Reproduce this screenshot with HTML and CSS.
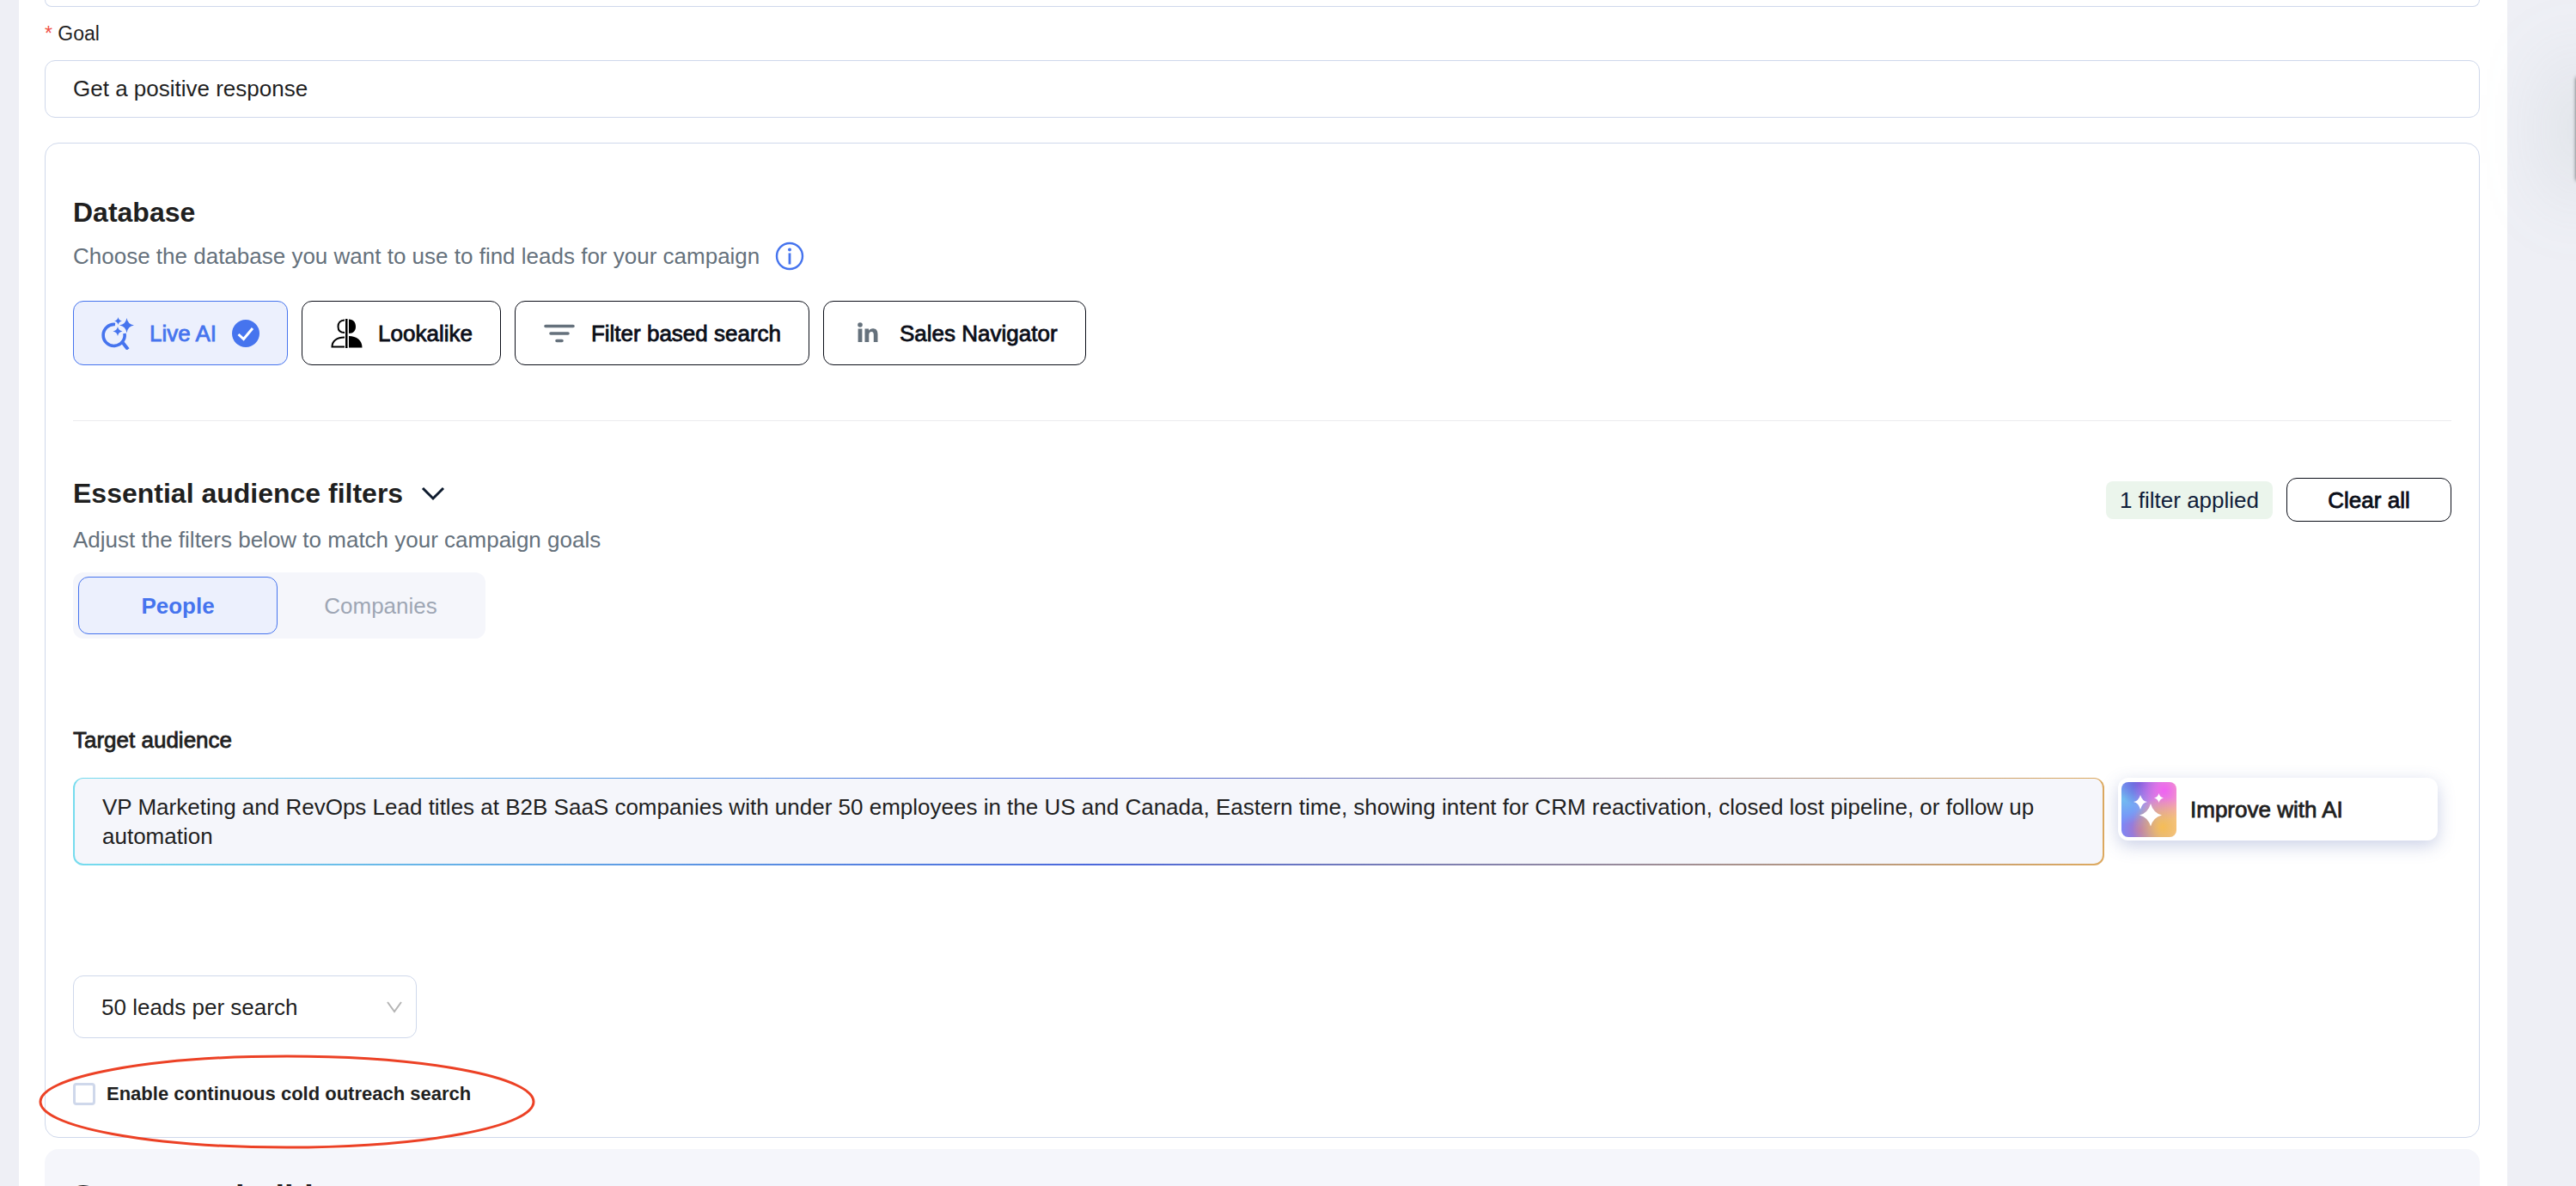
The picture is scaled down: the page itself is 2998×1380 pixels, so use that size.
FILE: index.html
```html
<!DOCTYPE html>
<html lang="en">
<head>
    <meta charset="UTF-8">
    <meta name="viewport" content="width=device-width, initial-scale=1.0">
    <title>Campaign setup</title>
    <link rel="stylesheet" href="styles.css">
</head>
<body>
    <main class="page">
        <div class="field-end"></div>

        <label class="goal-label" for="goal"><span class="required">*</span> Goal</label>
        <input class="goal-input" type="text" id="goal" value="Get a positive response">

        <section class="card">
            <h2>Database</h2>
            <p class="hint">
                Choose the database you want to use to find leads for your campaign
                <svg class="info" viewBox="0 0 34 34" fill="none" stroke="#4674ee" stroke-width="2.4">
                    <circle cx="17" cy="17" r="15"/>
                    <path d="M17 13.500v13" stroke-width="2.800"/>
                    <circle cx="17" cy="9.500" r="2" fill="#4674ee" stroke="none"/>
                </svg>
            </p>

            <div class="sources">
                <button class="source active">
                    <svg class="icon" viewBox="0 0 38 38" fill="none">
                        <path d="M16 8.500A12.500 12.500 0 1 0 27 19" stroke="#4674ee" stroke-width="3.600"/>
                        <path d="M23.500 28l7.500 9.500" stroke="#4674ee" stroke-width="4"/>
                        <path d="M29.500 1q1.200 7.500 8.500 8.500q-7.300 1-8.500 9q-1.200-8-8.500-9q7.300-1 8.500-8.500zM19.500 0q.7 3.800 4.500 4.500q-3.800.7-4.500 4.500q-.7-3.800-4.500-4.500q3.800-.7 4.500-4.500zM19 11q.8 4.700 5.500 5.500q-4.700.8-5.500 5.500q-.8-4.700-5.500-5.500q4.700-.8 5.500-5.500z" fill="#4674ee"/>
                    </svg>
                    <span>Live AI</span>
                    <svg class="check" viewBox="0 0 32 32">
                        <circle cx="16" cy="16" r="16" fill="#4674ee"/>
                        <path d="M7.500 17l6 5.500L24 10" fill="none" stroke="#fff" stroke-width="3"/>
                    </svg>
                </button>
                <button class="source">
                    <svg class="icon" viewBox="0 0 38 38">
                        <path d="M17 3.500C12 3.500 9.500 7 9.500 11S12 18 17 18" fill="none" stroke="#000" stroke-width="2"/>
                        <path d="M17 23.500C8 23.500 2.500 28 2.500 34.500H17" fill="none" stroke="#000" stroke-width="2"/>
                        <path d="M18 2h2.500v34H18zM22 2.500c5.500 0 8 4 8 8.500s-2.500 8-8 8zM22 22c9 0 15.500 5 15.500 13.500H22z"/>
                    </svg>
                    <span>Lookalike</span>
                </button>
                <button class="source">
                    <svg class="icon" viewBox="0 0 38 38" stroke="#65717c" stroke-width="3.600" stroke-linecap="round">
                        <path d="M3 10.500h32M9 19h20M16 27.500h6"/>
                    </svg>
                    <span>Filter based search</span>
                </button>
                <button class="source">
                    <svg class="icon" viewBox="0 0 38 38" fill="#65717c">
                        <circle cx="10" cy="9" r="2.800"/>
                        <path d="M7.600 13.500h4.800v15.500H7.600zM15.500 13.500H20v2.200c1-1.600 2.700-2.500 4.800-2.500 4.200 0 5.700 2.600 5.700 6.800v9h-4.700v-8.200c0-2.400-.7-3.700-2.500-3.700-2.100 0-3 1.400-3 3.800V29h-4.800z"/>
                    </svg>
                    <span>Sales Navigator</span>
                </button>
            </div>

            <hr>

            <div class="filters-head">
                <div>
                    <h2>Essential audience filters
                        <svg class="chevron" viewBox="0 0 28 20" fill="none" stroke="#0e1b2e" stroke-width="3">
                            <path d="M2 3l12 12L26 3"/>
                        </svg>
                    </h2>
                    <p class="hint">Adjust the filters below to match your campaign goals</p>
                </div>
                <div class="filters-actions">
                    <span class="badge">1 filter applied</span>
                    <button class="clear">Clear all</button>
                </div>
            </div>

            <div class="tabs">
                <button class="tab active">People</button>
                <button class="tab">Companies</button>
            </div>

            <label class="audience-label" for="audience">Target audience</label>
            <div class="audience">
                <textarea id="audience" rows="2">VP Marketing and RevOps Lead titles at B2B SaaS companies with under 50 employees in the US and Canada, Eastern time, showing intent for CRM reactivation, closed lost pipeline, or follow up automation</textarea>
                <button class="improve">
                    <span class="improve-icon">
                        <svg viewBox="0 0 64 64" fill="#fff">
                            <path d="M34 25q3 11 13 13.500q-10 2.500-13 13q-3-10.500-13-13q10-2.500 13-13.500zM22 15q2 7 8 8q-6 1-8 9q-2-8-8-9q6-1 8-8zM43.500 13q1 4.500 5.500 5.500q-4.500 1-5.500 5.500q-1-4.500-5.500-5.500q4.500-1 5.500-5.500z"/>
                        </svg>
                    </span>
                    Improve with AI
                </button>
            </div>

            <select class="leads" aria-label="Leads per search">
                <option>50 leads per search</option>
            </select>

            <div class="continuous">
                <input type="checkbox" id="continuous">
                <label for="continuous">Enable continuous cold outreach search</label>
                <svg class="highlight" viewBox="0 0 578 110" fill="none" stroke="#ec4125" stroke-width="3">
                    <ellipse cx="289" cy="55" rx="287" ry="53"/>
                </svg>
            </div>
        </section>

        <section class="next-card">
            <h2>Sequence builder</h2>
        </section>
    </main>
    <div class="drawer"></div>
</body>
</html>
```

FILE: styles.css
```css
* {
    box-sizing: border-box;
}

html {
    height: 100%;
    overflow: hidden;
}

body {
    height: 100%;
    margin: 0;
    overflow: hidden;
    background-color: #eeeff5;
    color: #1f1f1f;
    font-family: "Liberation Sans", Arial, sans-serif;
    font-size: 26px;
    line-height: 34px;
}

h2, p {
    margin: 0;
}

h2 {
    font-size: 32px;
    line-height: 40px;
}

button, input, select, textarea {
    font: inherit;
    color: inherit;
}

button {
    cursor: pointer;
}

.page {
    margin: 0 80px 0 22px;
    padding: 0 32px 0 30px;
    background-color: #fff;
}

.field-end {
    height: 8px;
    border: 1px solid #cfd8eb;
    border-top: none;
    border-radius: 0 0 12px 12px;
}

.goal-label {
    display: block;
    padding: 16px 0;
    font-size: 23px;
    line-height: 30px;
}

.required {
    color: #f0524b;
}

.goal-input {
    display: block;
    width: 100%;
    height: 67px;
    padding: 0 32px;
    border: 1px solid #cfd8eb;
    border-radius: 12px;
    background-color: #fff;
}

.card {
    margin-top: 29px;
    padding: 60px 32px 33px;
    border: 1px solid #cfd8eb;
    border-radius: 16px;
}

.hint {
    display: flex;
    align-items: center;
    gap: 18px;
    color: #65717c;
}

.card > .hint {
    margin-top: 14px;
}

.info {
    width: 34px;
    height: 34px;
}

.sources {
    display: flex;
    gap: 16px;
    margin-top: 35px;
}

.source {
    display: flex;
    align-items: center;
    gap: 18px;
    height: 75px;
    padding: 0 32px;
    border: 1px solid #0b0e18;
    border-radius: 12px;
    background-color: #fff;
    color: #0b0e18;
    -webkit-text-stroke: 0.8px;
}

.source.active {
    border-color: #4674ee;
    background-color: #ecf0fd;
    color: #4674ee;
}

.icon {
    width: 38px;
    height: 38px;
}

.check {
    width: 32px;
    height: 32px;
}

hr {
    margin: 64px 0 0;
    border: none;
    border-top: 1px solid #ececee;
}

.filters-head {
    display: flex;
    justify-content: space-between;
    margin-top: 64px;
}

.filters-head .hint {
    margin-top: 17px;
}

.chevron {
    width: 28px;
    height: 20px;
    margin-left: 12px;
}

.filters-actions {
    display: flex;
    align-items: center;
    align-self: flex-start;
    gap: 16px;
    padding-top: 2px;
}

.badge {
    padding: 5px 16px;
    border-radius: 8px;
    background-color: #ebf5ec;
    color: #10203a;
}

.clear {
    width: 192px;
    height: 51px;
    border: 1px solid #0b0e18;
    border-radius: 12px;
    background-color: #fff;
    color: #0b0e18;
    -webkit-text-stroke: 0.8px;
}

.tabs {
    display: flex;
    gap: 4px;
    width: 480px;
    margin-top: 21px;
    padding: 5px 6px;
    border-radius: 12px;
    background-color: #f5f6fb;
}

.tab {
    flex: 1;
    height: 67px;
    border: 1px solid transparent;
    border-radius: 12px;
    background-color: transparent;
    color: #9ea6b4;
}

.tab.active {
    border-color: #4674ee;
    background-color: #ecf0fd;
    color: #4674ee;
    font-weight: bold;
}

.audience-label {
    display: block;
    margin-top: 101px;
    -webkit-text-stroke: 0.8px;
}

.audience {
    display: flex;
    align-items: flex-start;
    gap: 16px;
    margin-top: 27px;
    padding-right: 16px;
}

.audience textarea {
    flex: 1;
    height: 102px;
    padding: 16px 32px;
    overflow: hidden;
    resize: none;
    border: 2px solid transparent;
    border-top-width: 1px;
    border-radius: 12px;
    background:
        linear-gradient(#f5f6fb, #f5f6fb) padding-box,
        linear-gradient(90deg, #76dcee, #4b68dc 50%, #dda95f) border-box;
}

.improve {
    display: flex;
    align-items: center;
    gap: 16px;
    width: 372px;
    height: 73px;
    padding: 0 4px;
    border: none;
    border-radius: 12px;
    background-color: #fff;
    box-shadow: 0 6px 20px rgba(70, 90, 170, 0.28);
    -webkit-text-stroke: 0.8px;
}

.improve-icon {
    width: 64px;
    height: 64px;
    border-radius: 8px;
    background:
        radial-gradient(circle at 75% 82%, #f6bd55 0, rgba(246, 189, 85, 0) 50%),
        radial-gradient(circle at 78% 15%, #f062f2 0, rgba(240, 98, 242, 0) 50%),
        radial-gradient(circle at 32% 0, #6b60d8 0, rgba(107, 96, 216, 0) 35%),
        radial-gradient(circle at 5% 30%, #72bdf0 0, rgba(114, 189, 240, 0) 40%),
        radial-gradient(circle at 35% 88%, #b070c0 0, rgba(176, 112, 192, 0) 35%),
        linear-gradient(90deg, #7889fb 20%, #f5c8a0);
}

.leads {
    display: block;
    width: 400px;
    height: 73px;
    margin-top: 128px;
    padding: 0 32px;
    appearance: none;
    border: 1px solid #cfd8eb;
    border-radius: 12px;
    background: #fff url("data:image/svg+xml,%3Csvg xmlns='http://www.w3.org/2000/svg' viewBox='0 0 18 14' fill='none' stroke='%23b5b5b5' stroke-width='2'%3E%3Cpath d='M1 1l8 11 8-11'/%3E%3C/svg%3E") no-repeat right 16px center / 18px 14px;
}

.continuous {
    position: relative;
    display: flex;
    align-items: center;
    gap: 13px;
    margin-top: 48px;
    font-size: 22px;
    font-weight: bold;
}

.continuous input {
    width: 26px;
    height: 26px;
    margin: 0;
    appearance: none;
    border: 3px solid #cfd8eb;
    border-radius: 4px;
    background-color: #fff;
}

/* red pen mark around the checkbox */
.highlight {
    position: absolute;
    top: -29px;
    left: -40px;
    width: 578px;
    height: 110px;
    pointer-events: none;
}

.next-card {
    margin-top: 13px;
    padding: 32px;
    border-radius: 16px;
    background-color: #f5f6fb;
}

.next-card h2 {
    font-size: 38px;
    line-height: 48px;
}

/* shadow of the panel hidden past the right edge */
.drawer {
    position: absolute;
    top: 90px;
    right: -10px;
    width: 10px;
    height: 120px;
    box-shadow: 0 0 4px rgba(0, 0, 0, 0.6), 0 0 90px 10px rgba(140, 160, 165, 0.4);
}
```
